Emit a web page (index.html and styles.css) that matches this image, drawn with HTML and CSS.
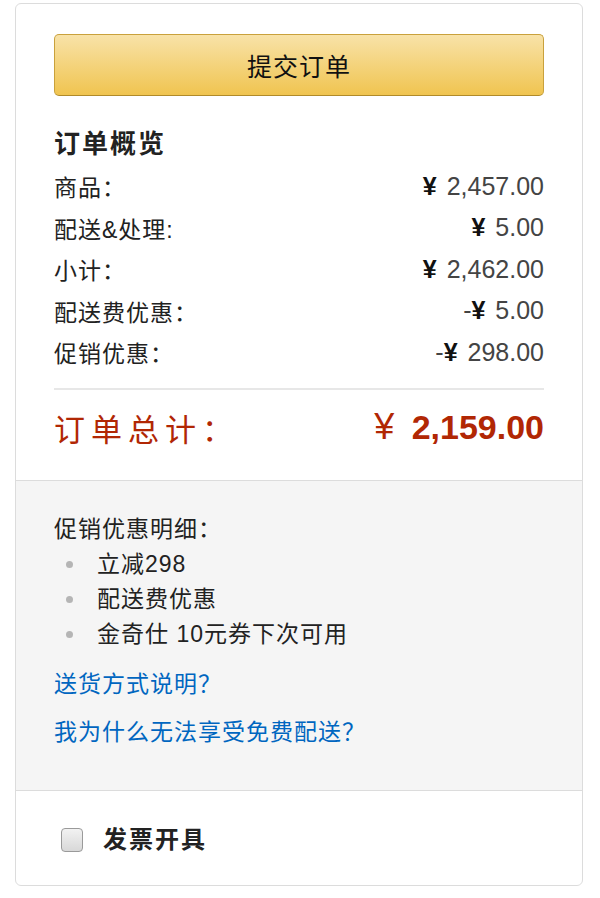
FILE: index.html
```html
<!DOCTYPE html>
<html lang="zh-CN">

<head>
    <meta charset="UTF-8">
    <meta name="viewport" content="width=device-width, initial-scale=1.0">
    <title>订单概览</title>
    <link rel="stylesheet" href="styles.css">
</head>

<body>
    <div class="order-box">
        <section class="summary">
            <button class="submit-button">提交订单</button>

            <h3 class="summary-title">订单概览</h3>
            <div class="summary-row">
                <span>商品：</span>
                <span class="amount"><span class="yen">¥</span> 2,457.00</span>
            </div>
            <div class="summary-row">
                <span>配送&amp;处理:</span>
                <span class="amount"><span class="yen">¥</span> 5.00</span>
            </div>
            <div class="summary-row">
                <span>小计：</span>
                <span class="amount"><span class="yen">¥</span> 2,462.00</span>
            </div>
            <div class="summary-row">
                <span>配送费优惠：</span>
                <span class="amount">-<span class="yen">¥</span> 5.00</span>
            </div>
            <div class="summary-row">
                <span>促销优惠：</span>
                <span class="amount">-<span class="yen">¥</span> 298.00</span>
            </div>

            <div class="summary-total">
                <span class="total-label">订单总计：</span>
                <span class="total-amount"><span class="yen">¥</span> 2,159.00</span>
            </div>
        </section>

        <section class="promo">
            <p class="promo-title">促销优惠明细：</p>
            <ul class="promo-list">
                <li>立减298</li>
                <li>配送费优惠</li>
                <li>金奇仕 10元券下次可用</li>
            </ul>
            <a href="#" class="promo-link">送货方式说明？</a>
            <a href="#" class="promo-link">我为什么无法享受免费配送？</a>
        </section>

        <section class="invoice">
            <label class="invoice-label">
                <input type="checkbox" class="invoice-check">
                <span>发票开具</span>
            </label>
        </section>
    </div>
</body>

</html>
```

FILE: styles.css
```css
* {
    box-sizing: border-box;
}

:root {
    --border: #dcdcdc;
    --textColor: #222;
    --amountColor: #444;
    --red: #b12704;
    --link: #0066c0;
}

body {
    margin: 0;
    padding: 3px 0 0 15px;
    background: #fff;
    color: var(--textColor);
    font-family: "Liberation Sans", "Noto Sans CJK SC", sans-serif;
    font-size: 23px;
    letter-spacing: 1px;
}

.order-box {
    width: 568px;
    border: 1px solid var(--border);
    border-radius: 6px;
    overflow: hidden;
}

.summary {
    padding: 30px 38px 26px;
}

.submit-button {
    display: block;
    width: 100%;
    height: 62px;
    border: 1px solid #c9a13c;
    border-bottom-color: #b08a2a;
    border-radius: 5px;
    background: linear-gradient(to bottom, #f8e2a8, #f0c450);
    color: #111;
    font-family: "Noto Sans CJK SC", sans-serif;
    font-size: 25px;
    letter-spacing: 1px;
    cursor: pointer;
}

.summary-title {
    margin: 28px 0 0;
    font-size: 26px;
    font-weight: 700;
    line-height: 41.5px;
    letter-spacing: 2px;
}

.summary-row {
    display: flex;
    justify-content: space-between;
    align-items: center;
    height: 41.5px;
}

.amount {
    font-size: 25px;
    letter-spacing: 0;
    color: var(--amountColor);
}

.yen {
    margin-right: 3px;
    color: #111;
    font-weight: 700;
}

.summary-total {
    display: flex;
    justify-content: space-between;
    align-items: center;
    height: 66px;
    margin-top: 15px;
    padding-top: 10px;
    border-top: 2px solid #e7e7e7;
    color: var(--red);
}

.total-label {
    font-size: 31px;
    letter-spacing: 6px;
}

.total-amount {
    font-size: 34px;
    font-weight: 700;
    letter-spacing: 0;
}

.total-amount .yen {
    margin-right: 8px;
    font-size: 36px;
    color: var(--red);
    font-weight: 400;
}

.promo {
    display: flex;
    flex-direction: column;
    align-items: flex-start;
    padding: 31px 38px 40px;
    border-top: 1px solid var(--border);
    border-bottom: 1px solid var(--border);
    background: #f5f5f5;
}

.promo-title {
    margin: 0;
    line-height: 35px;
}

.promo-list {
    margin: 0;
    padding: 0;
    list-style: none;
}

.promo-list li {
    display: flex;
    align-items: center;
    gap: 24px;
    line-height: 35px;
    padding-left: 12px;
}

.promo-list li::before {
    content: "";
    width: 7px;
    height: 7px;
    border-radius: 50%;
    background: #b5b5b5;
}

.promo-link {
    margin-top: 15px;
    line-height: 35px;
    color: var(--link);
    text-decoration: none;
}

.promo-link + .promo-link {
    margin-top: 13px;
}

.invoice {
    padding: 31px 38px 28px;
}

.invoice-label {
    display: flex;
    align-items: center;
    gap: 20px;
    padding-left: 7px;
    line-height: 35px;
    font-size: 24px;
    font-weight: 700;
    letter-spacing: 2px;
}

.invoice-check {
    appearance: none;
    -webkit-appearance: none;
    width: 22px;
    height: 24px;
    margin: 0;
    border: 1px solid #9a9a9a;
    border-radius: 4px;
    background: linear-gradient(to bottom, #f2f2f2, #d8d8d8);
}
```
